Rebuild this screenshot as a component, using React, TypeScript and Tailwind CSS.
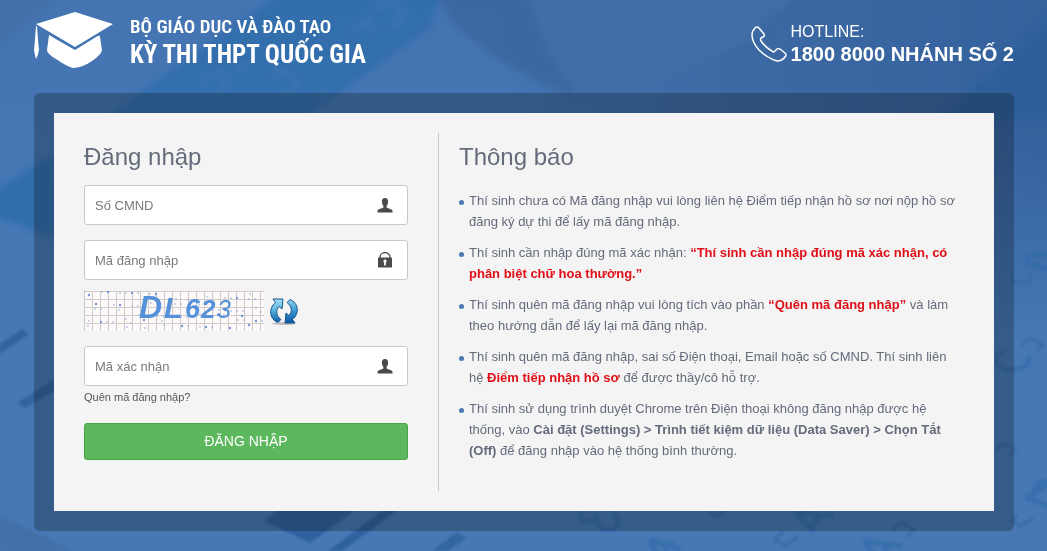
import React from 'react';

const SANS = "font-['Liberation_Sans',Arial,sans-serif]";

function Backdrop() {
  return (
    <svg
      aria-hidden="true"
      className="absolute inset-0 -z-10 h-full w-full"
      viewBox="0 0 1047 551"
      preserveAspectRatio="xMidYMid slice"
    >
      <defs>
        <linearGradient id="sky" x1="0" y1="0" x2="0" y2="1">
          <stop offset="0" stopColor="#4474b1" />
          <stop offset="0.4" stopColor="#4678b5" />
          <stop offset="1" stopColor="#4778b4" />
        </linearGradient>
        <linearGradient id="shade" x1="0" y1="0" x2="1" y2="0">
          <stop offset="0" stopColor="#3a669f" stopOpacity="0" />
          <stop offset="0.45" stopColor="#3a669f" stopOpacity="0.8" />
          <stop offset="1" stopColor="#335f9a" stopOpacity="0.9" />
        </linearGradient>
        <linearGradient id="fade" x1="0" y1="0" x2="0" y2="1">
          <stop offset="0" stopColor="#fff" />
          <stop offset="0.4" stopColor="#fff" />
          <stop offset="1" stopColor="#000" />
        </linearGradient>
        <mask id="fadeMask">
          <rect width="1047" height="340" fill="url(#fade)" />
        </mask>
        <filter id="soft" x="-10%" y="-10%" width="120%" height="120%">
          <feGaussianBlur stdDeviation="3" />
        </filter>
        <filter id="crisp" x="-10%" y="-10%" width="120%" height="120%">
          <feGaussianBlur stdDeviation="0.8" />
        </filter>
      </defs>
      <rect width="1047" height="551" fill="url(#sky)" />
      <rect x="500" width="547" height="340" fill="url(#shade)" mask="url(#fadeMask)" />
      <g filter="url(#soft)">
        <path d="M-10 -10H65L-10 52Z" fill="#426ca4" opacity=".6" />
        <path d="M285 -10H445L430 28L300 122H100L160 78Z" fill="#2f6dab" opacity=".75" />
        <path d="M-10 194L54 154V238L-10 214Z" fill="#2c6caa" opacity=".8" />
        <path d="M435 -10H531Q538 30 580 80L572 96Q500 70 450 20Z" fill="#3c659f" opacity=".8" />
        <path d="M531 -10H800L745 44Q700 64 620 94H580Q535 44 531 -10Z" fill="#416fa6" opacity=".9" />
        <path d="M1057 10L940 120H1057Z" fill="#2d5e9a" opacity=".8" />
        <g fill="none" stroke="#4576b2" strokeWidth="5" opacity=".5">
          <path d="M200 84l20 -14l10 14l-18 12M235 72l14 -10M270 78q14 -14 26 2q2 14 -16 14" />
          <path d="M372 12q16 -16 30 -2q4 14 -14 16M350 34l18 -14l8 14M310 100l18 -12" />
        </g>
      </g>
      <g filter="url(#crisp)">
        <path d="M0 515L74 551H0Z" fill="#436fa8" />
        <path d="M22 329L29 334L0 354V344Z" fill="#33659f" />
        <path d="M54 379V391L25 408L17 403Z" fill="#33659f" />
        <path d="M280 508H358L310 543L264 521Z" fill="#2e629f" />
        <path d="M386 508H400L342 551H328Z" fill="#2e629f" />
        <path d="M457 532L466 538L448 551H432Z" fill="#33669f" />
      </g>
      <g
        filter="url(#crisp)"
        fill="none"
        stroke="#2f6aa8"
        strokeWidth="5"
        opacity=".6"
      >
        <path d="M583 512q-8 8 4 9q8 -1 10 -6q-2 8 6 14q14 2 15 -6q0 -6 -6 -10" />
        <path d="M650 540l30 9M650 540l6 14M664 551l8 -10" />
        <path d="M796 512l38 4M796 512l18 20M812 526l10 -13" />
        <path d="M864 541l38 5M864 541l10 14M884 552l6 -8" />
        <path d="M1005 352q-11 2 -9 10q4 8 16 8q18 -2 17 -13" />
        <path d="M1026 498l26 -16M1026 498l22 8M1034 492q2 -12 16 -10" />
        <path d="M1026 262l24 8M1026 262q6 -12 24 -6" />
      </g>
      <g filter="url(#crisp)" fill="none" stroke="#34659f" strokeWidth="3" opacity=".6">
        <path d="M709 512l7 4l12 -7" />
        <path d="M783 532l-8 7l10 7l13 -9" />
        <path d="M892 531l9 -9l13 8l-8 7" />
        <path d="M1022 345l8 -7l13 7l-7 6" />
        <path d="M996 450l8 -7l11 7l-6 6" />
        <path d="M1018 515l-6 6l9 5l12 -8" />
        <path d="M1012 275l3 8l14 -2l2 -8" />
      </g>
    </svg>
  );
}

function CapLogo() {
  return (
    <svg aria-hidden="true" viewBox="0 0 80 58" className="h-[58px] w-20 shrink-0" fill="#fff">
      <path d="M41 1L79 13L41 36L2 13Z" />
      <path d="M15 24Q17 25 20 27L41 39L62 26Q66 23 66 26L68 39Q67 44 58 50Q48 57 39 57Q32 55 22 48Q13 43 13 39Z" />
      <path d="M2 15H3Q4 29 5 39Q4 45 2 48Q1 45 0 39Q1 29 2 15Z" />
    </svg>
  );
}

function PhoneIcon() {
  return (
    <svg
      aria-hidden="true"
      viewBox="0 0 36 36"
      className="size-9 shrink-0"
      fill="none"
      stroke="#fff"
      strokeWidth="1.5"
      strokeLinejoin="round"
    >
      <path d="M4 2Q6 0 8 2L13 8Q14 10 12 11L10 12Q9 13 10 15Q14 21 21 25Q23 27 24 25L26 23Q27 22 29 23L34 27Q36 29 34 31Q31 35 26 35Q16 32 8 24Q1 16 1 9Q1 5 4 2Z" />
    </svg>
  );
}

function UserIcon() {
  return (
    <svg aria-hidden="true" viewBox="0 0 16 15" className="h-[15px] w-4" fill="#4a4a4a">
      <path d="M8 0C10.500 0 11.300 1.800 11.100 4C11 6 10.200 7.200 9.600 8V9.500C11 10.500 15.500 11 15.500 13V14.500H.5V13C.5 11 5 10.500 6.400 9.500V8C5.800 7.200 5 6 4.900 4C4.700 1.800 5.500 0 8 0Z" />
    </svg>
  );
}

function LockIcon() {
  return (
    <svg aria-hidden="true" viewBox="0 0 16 16" className="size-4">
      <path d="M3 6V5a5 4.400 0 0 1 10 0V6" fill="none" stroke="#4a4a4a" strokeWidth="1.300" />
      <rect x="1" y="5.500" width="14" height="10" rx=".5" fill="#4a4a4a" />
      <path d="M8 7.500a1.700 1.700 0 0 1 .9 3.100V13.500H7.100V10.600A1.700 1.700 0 0 1 8 7.500Z" fill="#fff" />
    </svg>
  );
}

function RefreshIcon() {
  return (
    <svg aria-hidden="true" viewBox="-1 -1 30 29" className="h-[29px] w-[30px]">
      <defs>
        <linearGradient id="arrowUp" x1="0" y1="0" x2="0" y2="1">
          <stop offset="0" stopColor="#a5e0f5" />
          <stop offset=".5" stopColor="#56b0de" />
          <stop offset="1" stopColor="#0b5ea8" />
        </linearGradient>
        <linearGradient id="arrowDown" x1="0" y1="0" x2="0" y2="1">
          <stop offset="0" stopColor="#8fd3f0" />
          <stop offset=".55" stopColor="#2e8fcb" />
          <stop offset="1" stopColor="#0a569f" />
        </linearGradient>
      </defs>
      <ellipse cx="14" cy="25.500" rx="12" ry="1.500" fill="#888" opacity=".5" />
      <g stroke="#15558c" strokeWidth="1" strokeLinejoin="round">
        <path fill="url(#arrowUp)" d="M3 1H13L12 11L9 8.500C5.500 12 6 18 11 21.500L8 24.500C-1 21 -1.500 10 5.500 4.500Z" />
        <path fill="url(#arrowDown)" d="M25 25H15L16 15L19 17.500C22.500 14 22 8 17 4.500L20 1.500C29 5 29.500 16 22.500 21.500Z" />
      </g>
    </svg>
  );
}

const specks = Array.from({ length: 80 }, (_, i) => ({
  x: (i * 67 + 13 * (i % 7)) % 179,
  y: (i * 29 + 5 * (i % 5)) % 39,
  r: i % 4 === 0 ? 1.2 : 0.7,
}));

function Captcha() {
  return (
    <svg role="img" aria-label="DL623" viewBox="0 0 180 40" className="h-10 w-[180px]">
      <defs>
        <pattern id="grid" width="8" height="8" patternUnits="userSpaceOnUse">
          <path d="M0 .5H8M.5 0V8" stroke="#d0cccc" strokeWidth="1" />
        </pattern>
      </defs>
      <rect width="180" height="40" fill="#fdf9f9" />
      <rect width="180" height="40" fill="url(#grid)" />
      {specks.map((s, i) => (
        <circle key={i} cx={s.x} cy={s.y} r={s.r} fill="#7796dc" />
      ))}
      <g fill="#5590da" fontFamily="Liberation Sans, sans-serif" fontStyle="italic">
        <text x="55" y="27" fontSize="32" fontWeight="700">D</text>
        <text x="80" y="27" fontSize="30" fontWeight="700">L</text>
        <text x="101" y="27" fontSize="27" fontWeight="700">6</text>
        <text x="117" y="27" fontSize="26" fontWeight="700">2</text>
        <text x="133" y="27" fontSize="25">3</text>
      </g>
    </svg>
  );
}

type FieldProps = { id: string; label: string; type?: string; icon: React.ReactNode };

function Field({ id, label, type = 'text', icon }: FieldProps) {
  return (
    <div className="flex h-10 items-center rounded-[3px] border border-[#c8c8c8] bg-white pr-[14px] pl-[10px]">
      <label htmlFor={id} className="sr-only">{label}</label>
      <input
        id={id}
        type={type}
        placeholder={label}
        className="h-full min-w-0 flex-1 bg-transparent text-[13px] text-[#555] outline-none placeholder:text-[#7b7b7b]"
      />
      {icon}
    </div>
  );
}

function Red({ children }: { children: React.ReactNode }) {
  return <strong className="font-bold text-[#e00f17]">{children}</strong>;
}

function Notice({ children }: { children: React.ReactNode }) {
  return (
    <li className="flex gap-[5px]">
      <span className="mt-[10px] size-[5px] shrink-0 rounded-full bg-[#4a79b5]" />
      <p>{children}</p>
    </li>
  );
}

export default function App() {
  return (
    <div className={`relative isolate min-h-screen overflow-hidden bg-[#4576b3] pr-[33px] pb-5 pl-[34px] ${SANS}`}>
      <Backdrop />
      <header className="flex h-[93px] items-start justify-between pt-[11px] text-white">
        <div className="flex gap-4">
          <CapLogo />
          <div className="pt-1 font-['Roboto_Condensed','Liberation_Sans_Narrow',Roboto,sans-serif] font-bold">
            <p className="text-[19px] leading-6 font-semibold">BỘ GIÁO DỤC VÀ ĐÀO TẠO</p>
            <h1 className="text-[25px] leading-8">KỲ THI THPT QUỐC GIA</h1>
          </div>
        </div>
        <div className="flex items-center gap-1 pt-[11px]">
          <PhoneIcon />
          <p className="text-[16px] leading-5">
            HOTLINE:
            <strong className="block text-[20px] leading-6">1800 8000 NHÁNH SỐ 2</strong>
          </p>
        </div>
      </header>
      <main className="rounded-md bg-[#060a10]/26 p-5">
        <div className="flex bg-[#f4f4f4] px-[30px] py-5 text-[#646b7b]">
          <form className="w-[355px] shrink-0 border-r border-[#c8c8c8] pt-2 pr-[30px] pb-[31px]" onSubmit={(e) => e.preventDefault()}>
            <h2 className="mb-3 text-[24px] leading-8">Đăng nhập</h2>
            <div className="flex flex-col gap-[15px]">
              <Field id="cmnd" label="Số CMND" icon={<UserIcon />} />
              <Field id="code" label="Mã đăng nhập" type="password" icon={<LockIcon />} />
            </div>
            <div className="mt-[11px] mb-[15px] flex items-center gap-[5px]">
              <Captcha />
              <button type="button" aria-label="Đổi mã xác nhận"><RefreshIcon /></button>
            </div>
            <Field id="captcha" label="Mã xác nhận" icon={<UserIcon />} />
            <a href="#forgot" className="mt-[3px] block text-[11px] leading-4 text-[#555]">Quên mã đăng nhập?</a>
            <button type="submit" className="mt-[18px] h-[37px] w-full rounded-[3px] border border-[#4ba04b] bg-[#5cb85c] text-[14px] text-white">
              ĐĂNG NHẬP
            </button>
          </form>
          <section className="min-w-0 flex-1 pt-2 pl-5">
            <h2 className="mb-[17px] text-[24px] leading-8">Thông báo</h2>
            <ul className="flex flex-col gap-[10px] pr-2 text-[13px] leading-[21px]">
              <Notice>
                Thí sinh chưa có Mã đăng nhập vui lòng liên hệ Điểm tiếp nhận hồ sơ nơi nộp hồ sơ đăng ký dự thi để lấy mã đăng nhập.
              </Notice>
              <Notice>
                Thí sinh cần nhập đúng mã xác nhận: <Red>“Thí sinh cần nhập đúng mã xác nhận, có phân biệt chữ hoa thường.”</Red>
              </Notice>
              <Notice>
                Thí sinh quên mã đăng nhập vui lòng tích vào phần <Red>“Quên mã đăng nhập”</Red> và làm theo hướng dẫn để lấy lại mã đăng nhập.
              </Notice>
              <Notice>
                Thí sinh quên mã đăng nhập, sai số Điện thoại, Email hoặc số CMND. Thí sinh liên hệ <Red>Điểm tiếp nhận hồ sơ</Red> để được thầy/cô hỗ trợ.
              </Notice>
              <Notice>
                Thí sinh sử dụng trình duyệt Chrome trên Điện thoại không đăng nhập được hệ thống, vào <strong>Cài đặt (Settings) &gt; Trình tiết kiệm dữ liệu (Data Saver) &gt; Chọn Tắt (Off)</strong> để đăng nhập vào hệ thống bình thường.
              </Notice>
            </ul>
          </section>
        </div>
      </main>
    </div>
  );
}
